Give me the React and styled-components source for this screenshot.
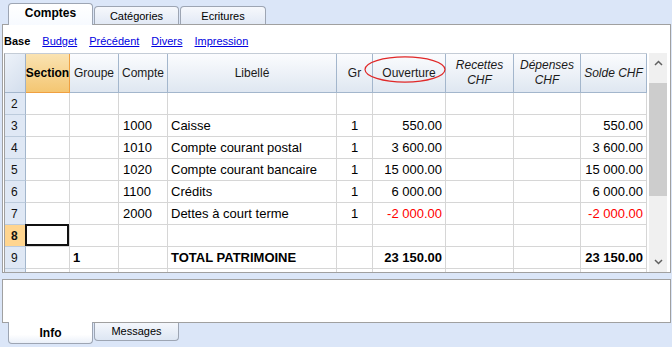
import React from "react";
import styled, { createGlobalStyle, css } from "styled-components";

const Global = createGlobalStyle`
  html, body { margin: 0; padding: 0; }
  body { background: #dbe6f8; font-family: "Liberation Sans", Arial, sans-serif; }
`;

const COLS = "21px 44px 49px 49px 169px 36px 73px 68px 67px 66px";

const Page = styled.div`
  width: 672px;
  height: 347px;
  display: flex;
  flex-direction: column;
  background: #dbe6f8;
  overflow: hidden;
  color: #000;
`;

const TopTabs = styled.div`
  height: 24px;
  display: flex;
  align-items: flex-end;
  padding-left: 8px;
  gap: 1px;
  box-sizing: border-box;
`;

const Tab = styled.div`
  box-sizing: border-box;
  width: ${(p) => p.$w || 85}px;
  border: 1px solid #9da5b3;
  display: flex;
  justify-content: center;
  padding-top: 2px;
  line-height: 14px;
  ${(p) =>
    p.$top
      ? css`
          border-bottom: none;
          border-radius: 4px 4px 0 0;
        `
      : css`
          border-top: none;
          border-radius: 0 0 4px 4px;
        `}
  ${(p) =>
    p.$active
      ? css`
          height: 22px;
          font-size: 12px;
          font-weight: bold;
          position: relative;
          z-index: 1;
          background: linear-gradient(#ffffff, #f7faff);
          ${p.$top ? "margin-bottom: -1px;" : "margin-top: -1px; padding-top: 4px; background: linear-gradient(#ffffff 60%, #eaf0f9);"}
        `
      : css`
          height: 18px;
          font-size: 11px;
          background: ${p.$top
            ? "linear-gradient(#f6f8fc, #e2e9f5)"
            : "linear-gradient(#f4f7fc, #dde6f3)"};
          ${p.$top ? "" : "padding-top: 1px;"}
        `}
`;

const MainPanel = styled.div`
  box-sizing: border-box;
  margin: 0 1px 0 2px;
  height: 249px;
  border: 1px solid #a0a0a0;
  background: #fff;
  display: flex;
  flex-direction: column;
`;

const LinkBar = styled.div`
  height: 28px;
  display: flex;
  align-items: center;
  gap: 12px;
  padding: 3px 0 0 1px;
  box-sizing: border-box;
  font-size: 11px;
`;

const Link = styled.a`
  color: #0000e0;
  text-decoration: underline;
  cursor: pointer;
`;

const Current = styled.span`
  font-weight: bold;
  color: #000;
`;

const GridArea = styled.div`
  flex: 1;
  min-height: 0;
  display: flex;
`;

const GridWrap = styled.div`
  margin-left: 1px;
  width: 643px;
  box-sizing: border-box;
  border-left: 1px solid #a0a0a0;
  border-top: 1px solid #c4ccd6;
  overflow: hidden;
  display: flex;
  flex-direction: column;
`;

const HeaderRow = styled.div`
  position: relative;
  display: grid;
  grid-template-columns: ${COLS};
  height: 39px;
  flex: none;
`;

const HeadCell = styled.div`
  box-sizing: border-box;
  border-right: 1px solid #a3b6cc;
  border-bottom: 1px solid #a3b6cc;
  background: linear-gradient(#fbfcfe, #dfe7f1);
  display: flex;
  flex-direction: column;
  align-items: center;
  justify-content: center;
  text-align: center;
  font-size: 12px;
  line-height: 15px;
  color: #1a1a1a;
  font-style: ${(p) => (p.$italic ? "italic" : "normal")};
  ${(p) =>
    p.$kind === "corner" &&
    css`
      background: linear-gradient(135deg, #edf2f9, #d3deed);
      border-right-color: #9fb2c9;
    `}
  ${(p) =>
    p.$kind === "selected" &&
    css`
      background: linear-gradient(#fae3b2, #f4c672);
      border-right-color: #f0a040;
      border-bottom-color: #f0a040;
      font-weight: bold;
      color: #000;
    `}
`;

const Ellipse = styled.svg`
  position: absolute;
  left: 359px;
  top: 2px;
  width: 82px;
  height: 27px;
  pointer-events: none;
`;

const DataRow = styled.div`
  display: grid;
  grid-template-columns: ${COLS};
  height: 22px;
  flex: none;
`;

const RowHead = styled.div`
  box-sizing: border-box;
  border-right: 1px solid #a3b6cc;
  border-bottom: 1px solid #bccbdc;
  background: ${(p) => (p.$sel ? "#ffd58f" : "#dfe8f5")};
  font-weight: ${(p) => (p.$sel ? "bold" : "normal")};
  font-size: 12px;
  padding-left: 6px;
  display: flex;
  align-items: center;
  color: #111;
`;

const Cell = styled.div`
  position: relative;
  box-sizing: border-box;
  border-right: 1px solid #d6d6d6;
  border-bottom: 1px solid #d6d6d6;
  font-size: 13px;
  padding: 0 3px 0 ${(p) => (p.$pl != null ? p.$pl : 3)}px;
  display: flex;
  align-items: center;
  white-space: nowrap;
  justify-content: ${(p) =>
    p.$align === "right" ? "flex-end" : p.$align === "center" ? "center" : "flex-start"};
  color: ${(p) => (p.$red ? "#ff0000" : "#000")};
  font-weight: ${(p) => (p.$bold ? "bold" : "normal")};
  ${(p) =>
    p.$cursor &&
    css`
      &::after {
        content: "";
        position: absolute;
        left: -1px;
        top: -1px;
        right: 0;
        bottom: 0;
        border: 2px solid #111;
      }
    `}
`;

const Scrollbar = styled.div`
  margin-left: 2px;
  width: 18px;
  background: #f0f0f0;
  display: flex;
  flex-direction: column;
`;

const ArrowBtn = styled.div`
  height: 20px;
  flex: none;
  display: flex;
  align-items: center;
  justify-content: center;
`;

const Track = styled.div`
  flex: 1;
  padding-top: 10px;
`;

const Thumb = styled.div`
  height: 113px;
  background: #cdcdcd;
`;

const BottomPanel = styled.div`
  box-sizing: border-box;
  margin: 6px 1px 0 2px;
  height: 44px;
  border: 1px solid #a0a0a0;
  background: #fff;
`;

const BottomTabs = styled.div`
  display: flex;
  align-items: flex-start;
  padding-left: 8px;
  gap: 1px;
`;

const Chevron = ({ up }) => (
  <svg width="9" height="6" viewBox="0 0 9 6">
    <polyline
      points={up ? "1,5 4.5,1.5 8,5" : "1,1 4.5,4.5 8,1"}
      fill="none"
      stroke="#606060"
      strokeWidth="1.5"
    />
  </svg>
);

const rows = [
  { n: 2 },
  { n: 3, compte: "1000", lib: "Caisse", gr: "1", ouv: "550.00", solde: "550.00" },
  { n: 4, compte: "1010", lib: "Compte courant postal", gr: "1", ouv: "3 600.00", solde: "3 600.00" },
  { n: 5, compte: "1020", lib: "Compte courant bancaire", gr: "1", ouv: "15 000.00", solde: "15 000.00" },
  { n: 6, compte: "1100", lib: "Crédits", gr: "1", ouv: "6 000.00", solde: "6 000.00" },
  { n: 7, compte: "2000", lib: "Dettes à court terme", gr: "1", ouv: "-2 000.00", solde: "-2 000.00", red: true },
  { n: 8, sel: true },
  { n: 9, groupe: "1", lib: "TOTAL PATRIMOINE", ouv: "23 150.00", solde: "23 150.00", bold: true },
  { n: 10, hideNum: true },
];

export default function App() {
  return (
    <Page>
      <Global />
      <TopTabs>
        <Tab $top $active $w={85}>Comptes</Tab>
        <Tab $top $w={85}>Catégories</Tab>
        <Tab $top $w={86}>Ecritures</Tab>
      </TopTabs>
      <MainPanel>
        <LinkBar>
          <Current>Base</Current>
          <Link>Budget</Link>
          <Link>Précédent</Link>
          <Link>Divers</Link>
          <Link>Impression</Link>
        </LinkBar>
        <GridArea>
          <GridWrap>
            <HeaderRow>
              <HeadCell $kind="corner" />
              <HeadCell $kind="selected">Section</HeadCell>
              <HeadCell>Groupe</HeadCell>
              <HeadCell>Compte</HeadCell>
              <HeadCell>Libellé</HeadCell>
              <HeadCell>Gr</HeadCell>
              <HeadCell>Ouverture</HeadCell>
              <HeadCell $italic>
                <span>Recettes</span>
                <span>CHF</span>
              </HeadCell>
              <HeadCell $italic>
                <span>Dépenses</span>
                <span>CHF</span>
              </HeadCell>
              <HeadCell $italic>Solde CHF</HeadCell>
              <Ellipse viewBox="0 0 82 27">
                <ellipse cx="41" cy="13.5" rx="40" ry="12.6" fill="none" stroke="#e02828" strokeWidth="1.2" />
              </Ellipse>
            </HeaderRow>
            {rows.map((r) => (
              <DataRow key={r.n}>
                <RowHead $sel={r.sel}>{r.hideNum ? "" : r.n}</RowHead>
                <Cell $cursor={r.sel} />
                <Cell $bold={r.bold}>{r.groupe}</Cell>
                <Cell $pl={4}>{r.compte}</Cell>
                <Cell $bold={r.bold}>{r.lib}</Cell>
                <Cell $align="center">{r.gr}</Cell>
                <Cell $align="right" $red={r.red} $bold={r.bold}>{r.ouv}</Cell>
                <Cell />
                <Cell />
                <Cell $align="right" $red={r.red} $bold={r.bold}>{r.solde}</Cell>
              </DataRow>
            ))}
          </GridWrap>
          <Scrollbar>
            <ArrowBtn>
              <Chevron up />
            </ArrowBtn>
            <Track>
              <Thumb />
            </Track>
            <ArrowBtn>
              <Chevron />
            </ArrowBtn>
          </Scrollbar>
        </GridArea>
      </MainPanel>
      <BottomPanel />
      <BottomTabs>
        <Tab $active $w={85}>Info</Tab>
        <Tab $w={85}>Messages</Tab>
      </BottomTabs>
    </Page>
  );
}
